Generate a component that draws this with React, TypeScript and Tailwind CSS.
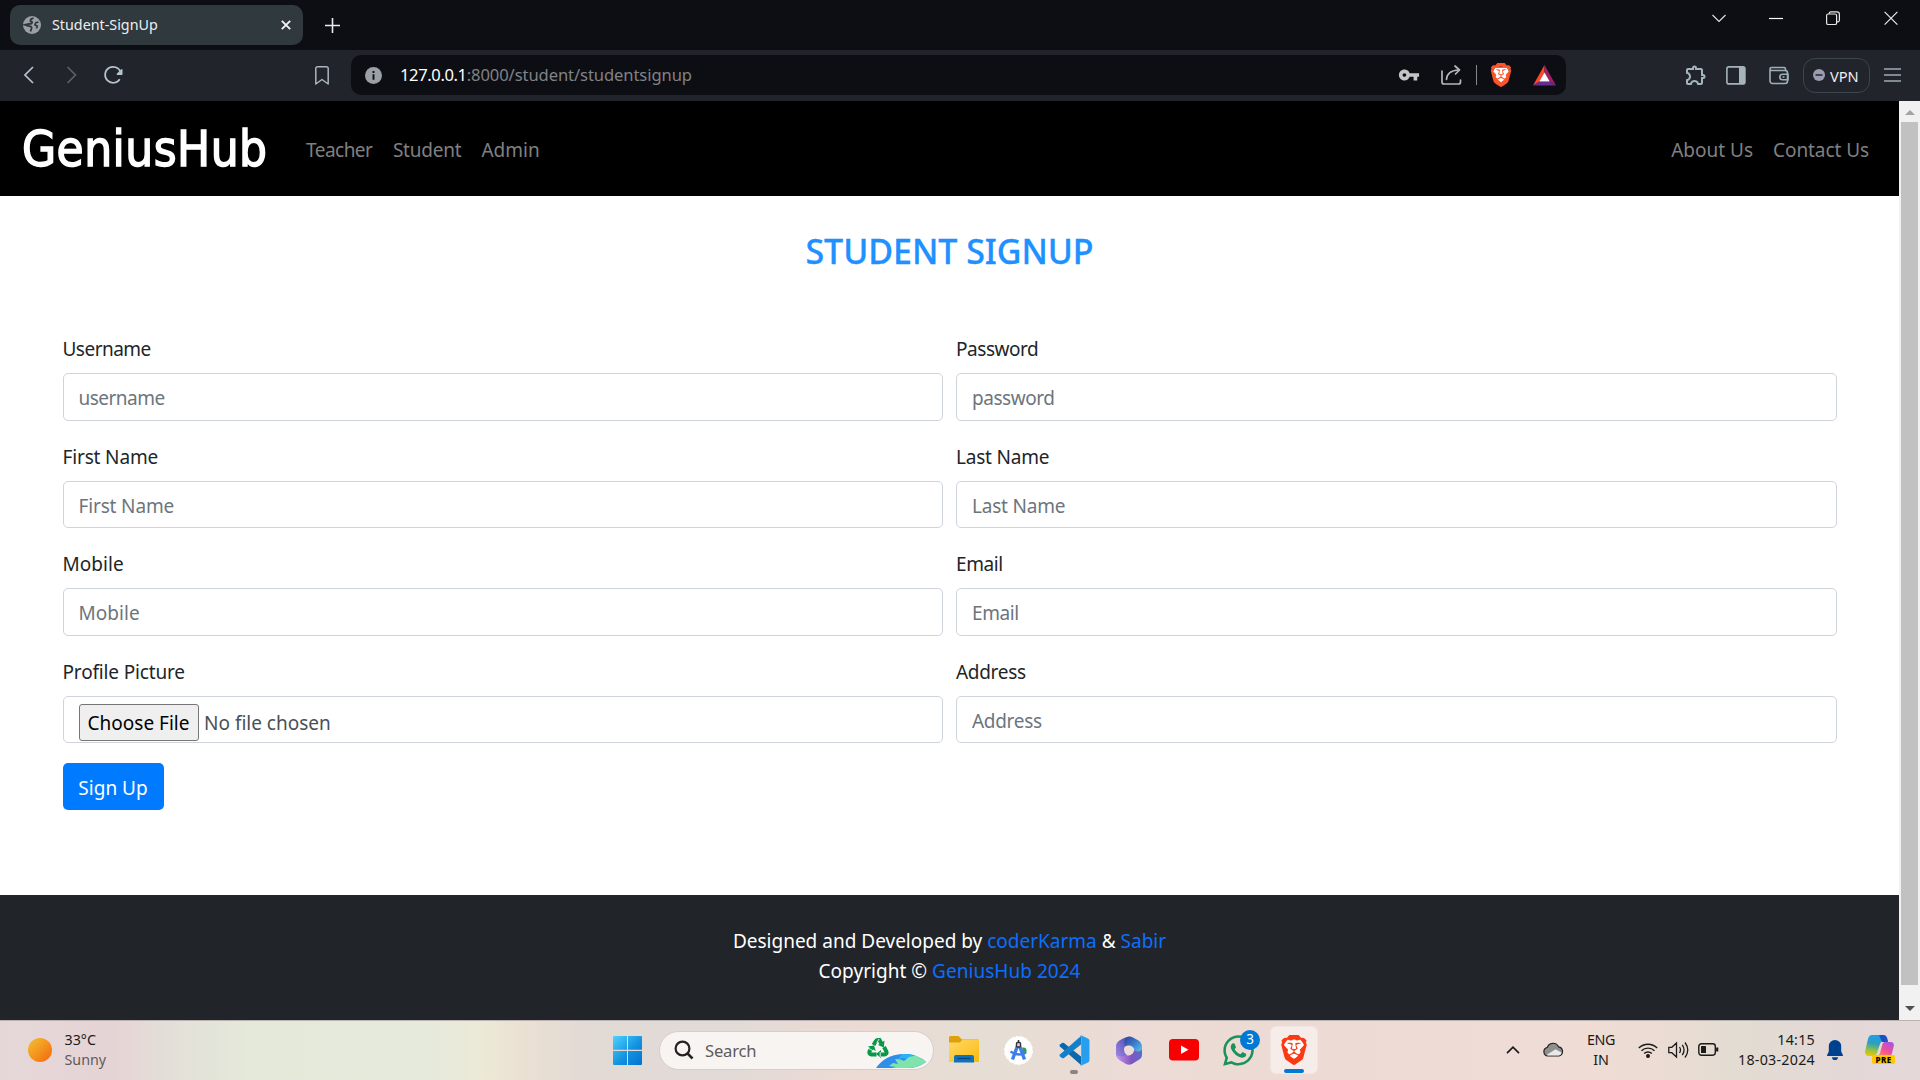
import React from "react";
import { SiBrave } from "react-icons/si";
import { FaWhatsapp } from "react-icons/fa";
import { MdOutlineExtension, MdVpnKey } from "react-icons/md";

function TabStrip() {
  return (
    <div className="flex h-[50px] items-start bg-[#0d0e13]">
      <div className="mt-[5px] ml-[10px] flex h-10 w-[293px] items-center rounded-[10px] bg-[#30393d] pr-3 pl-[13px]">
        <svg width="18" height="18" viewBox="0 0 18 18">
          <circle cx="9" cy="9" r="9" fill="#9aa0a6" />
          <path d="M10.500 2.200Q7.200 3 7.400 5l1.800 1.200Q8.800 8 6 8l-4 .8 3.500 1.400q2.800-.4 3.200 1.500L7.500 15.500" fill="none" stroke="#30393d" strokeWidth="1.800" />
          <path d="M15.500 6l-2.700.8-.8 2 2.300 1.400-.8 2.300" fill="none" stroke="#30393d" strokeWidth="1.700" />
        </svg>
        <span className="ml-[11px] flex-1 text-[14.3px] leading-5 text-[#eceff1]">Student-SignUp</span>
        <svg width="10" height="10" viewBox="0 0 10 10" stroke="#f1f3f4" strokeWidth="1.900">
          <path d="M.8.8l8.400 8.400M9.200.8.8 9.200" />
        </svg>
      </div>
      <svg className="mt-[17px] ml-[21px]" width="17" height="17" viewBox="0 0 17 17" stroke="#e8eaed" strokeWidth="1.600">
        <path d="M8.500 1v15M1 8.500h15" />
      </svg>
      <div className="mt-[10px] mr-[22px] ml-auto flex items-center text-[#e6e6e6]">
        <svg width="14" height="16" viewBox="0 0 14 16" fill="none" stroke="currentColor" strokeWidth="1.100">
          <path d="M.5 5 7 11.500 13.500 5" />
        </svg>
        <svg className="ml-[43px]" width="14" height="16" viewBox="0 0 14 16" stroke="#fff" strokeWidth="1.200">
          <path d="M0 8.500h14" />
        </svg>
        <svg className="ml-[43px]" width="14" height="16" viewBox="0 0 14 16" fill="none" stroke="currentColor" strokeWidth="1.200">
          <rect x=".6" y="4" width="10" height="10.500" rx="1.600" />
          <path d="M3.200 4V3.200A1.600 1.600 0 0 1 4.800 1.800h6.200a2.400 2.400 0 0 1 2.400 2.400v6a1.600 1.600 0 0 1-1.600 1.600h-1" />
        </svg>
        <svg className="ml-[44px]" width="14" height="16" viewBox="0 0 14 16" stroke="currentColor" strokeWidth="1.200">
          <path d="M.6 1.800l12.800 12.800M13.400 1.800.6 14.600" />
        </svg>
      </div>
    </div>
  );
}

function BraveShield({ className, color }: { className: string; color: string }) {
  return (
    <span className={`relative block ${className}`}>
      <svg className="absolute inset-0 size-full" viewBox="0 0 24 24">
        <path d="M6 4.500h12l2 4-2.500 9L12 22l-5.500-4.500L4 8.500z" fill="#fff" />
      </svg>
      <SiBrave className="relative size-full" color={color} />
    </span>
  );
}

function Toolbar() {
  return (
    <div className="flex h-[51px] items-center bg-[#22242c] text-[#a3adb3]">
      <svg className="mb-px ml-6" width="11" height="18" viewBox="0 0 11 18" fill="none" stroke="#b5c4ca" strokeWidth="1.700">
        <path d="M9 1 1 9l8 8" />
      </svg>
      <svg className="mb-px ml-[31px]" width="11" height="18" viewBox="0 0 11 18" fill="none" stroke="#5c6167" strokeWidth="1.700">
        <path d="M1.500 1l8 8-8 8" />
      </svg>
      <svg className="mb-[2px] ml-[26px]" width="20" height="20" viewBox="0 0 20 20" fill="none" stroke="#b5c4ca" strokeWidth="1.700">
        <path d="M16.800 14.200A8 8 0 1 1 17.600 7" />
        <path d="M18.800 4.800v4.500h-4.500z" fill="#b5c4ca" strokeLinejoin="round" strokeWidth="1.400" />
      </svg>
      <svg className="ml-[192px]" width="14" height="19" viewBox="0 0 14 19" fill="none" stroke="#a9b5ba" strokeWidth="1.500" strokeLinejoin="round">
        <path d="M.8 2.500A1.700 1.700 0 0 1 2.500.8h9a1.700 1.700 0 0 1 1.700 1.700V18L7 13.500.8 18z" />
      </svg>
      <div className="mb-px ml-[22px] flex h-10 w-[1215px] items-center rounded-[10px] bg-[#0d0e13] pl-[14px]">
        <svg width="17" height="17" viewBox="0 0 17 17">
          <circle cx="8.500" cy="8.500" r="8.500" fill="#9aa0a6" />
          <path d="M8.500 7.200v5.600M8.500 3.900v2" stroke="#0d0e13" strokeWidth="1.900" />
        </svg>
        <span className="ml-[18px] text-[16.6px] leading-6 tracking-[-0.4px] text-white">127.0.0.1</span>
        <span className="text-[16.6px] leading-6 tracking-[-0.1px] text-[#808286]">:8000/student/studentsignup</span>
        <MdVpnKey className="mb-px ml-auto" size={22} color="#c4c5c7" />
        <svg className="ml-[21px]" width="21" height="20" viewBox="0 0 21 20" fill="none" stroke="#b4b6b9" strokeWidth="1.700" strokeLinecap="round" strokeLinejoin="round">
          <path d="M1 6v11a2 2 0 0 0 2 2h14.500a2 2 0 0 0 2-2v-2" />
          <path d="M5.500 14.500c.3-6 4-9 12-9.500M14 1l4.500 4L14.500 9" />
        </svg>
        <span className="ml-[14px] h-5 w-px bg-[#85878c]" />
        <BraveShield className="ml-[12px] size-6" color="#fb542b" />
        <svg className="mr-[10px] ml-[20px]" width="23" height="21" viewBox="0 0 23 21">
          <path d="M11.500 0 0 20.500 6.500 16.500 11.500 8z" fill="#ff4724" />
          <path d="M11.500 0 23 20.500 16.500 16.500 11.500 8z" fill="#9e1f63" />
          <path d="M0 20.500h23l-6.500-4h-10z" fill="#662d91" />
          <path d="M11.500 7.500l5.200 9.100H6.300z" fill="#fff" />
        </svg>
      </div>
      <MdOutlineExtension className="mb-px ml-[118px]" size={24} color="#a3b4ba" />
      <svg className="mb-px ml-[18px]" width="20" height="19" viewBox="0 0 20 19">
        <rect x=".9" y=".9" width="18" height="17" rx="2" fill="none" stroke="#a6b4ba" strokeWidth="1.600" />
        <path d="M13 1h4.500A1.500 1.500 0 0 1 19 2.500v14a1.500 1.500 0 0 1-1.500 1.500H13z" fill="#a6b4ba" />
      </svg>
      <svg className="mb-px ml-[23px]" width="20" height="19" viewBox="0 0 20 19" fill="none" stroke="#9eb0b6" strokeWidth="1.600">
        <path d="M1 3v12a2.500 2.500 0 0 0 2.500 2.500h12.500a2.500 2.500 0 0 0 2.500-2.500V7A2.500 2.500 0 0 0 16 4.500H2.500a1.500 1.500 0 0 1 0-3H15A1.500 1.500 0 0 1 16.500 3v1.500" />
        <path d="M19 8.300h-5.500a2.700 2.700 0 0 0 0 5.400H19zM13.500 11h2" />
      </svg>
      <div className="mb-px ml-[14px] flex h-[35px] w-[67px] items-center rounded-[12px] border border-[#3c464b] pl-[9px]">
        <svg width="12" height="12" viewBox="0 0 12 12">
          <circle cx="6" cy="6" r="6" fill="#9a9cb0" />
          <path d="M2.500 6h7" stroke="#22242c" strokeWidth="1.500" />
        </svg>
        <span className="ml-[5px] pt-px text-[14.6px] leading-5 text-[#eeeef2]">VPN</span>
      </div>
      <svg className="mb-px ml-[14px]" width="17" height="14" viewBox="0 0 17 14" stroke="#9eabb0" strokeWidth="1.500">
        <path d="M0 1h17M0 7h17M0 13h17" />
      </svg>
    </div>
  );
}

function NavBar() {
  return (
    <nav className="flex h-[95px] items-center bg-black pt-0.5 pr-[30px] pl-[22px] text-[19px] leading-[30px] text-[#808080]">
      <a className="w-[284px] font-['DejaVu_Sans_Condensed','DejaVu_Sans'] text-[49px] leading-none tracking-[0.45px] font-stretch-condensed text-white [-webkit-text-stroke:1.4px_white]">GeniusHub</a>
      <a className="tracking-[-0.52px]">Teacher</a>
      <a className="ml-[20.500px] tracking-[-0.22px]">Student</a>
      <a className="ml-5">Admin</a>
      <a className="ml-auto">About Us</a>
      <a className="ml-5 tracking-[-0.07px]">Contact Us</a>
    </nav>
  );
}

function Field({ label, placeholder, spacing = "" }: { label: string; placeholder: string; spacing?: string }) {
  return (
    <label className="flex flex-col">
      <span className={`mb-[9px] h-[31px] pt-px leading-[30px] text-[#212529] ${spacing}`}>{label}</span>
      <input
        className={`h-[47.5px] rounded-[5px] border border-[#ced4da] bg-white px-[15px] pt-[2.7px] leading-[30px] placeholder:text-[#6c757d] ${spacing}`}
        placeholder={placeholder}
      />
    </label>
  );
}

function SignupPage() {
  return (
    <main className="flex flex-1 flex-col bg-white px-[62.5px] pt-[34px]">
      <h3 className="h-[42px] text-center text-[34px] leading-[42px] font-medium tracking-[-0.04px] text-[#1e90ff] [-webkit-text-stroke:0.3px_#1e90ff]">STUDENT SIGNUP</h3>
      <form className="mt-[61px] grid grid-cols-2 gap-x-[13px] gap-y-5 text-[19px]">
        <Field label="Username" placeholder="username" spacing="tracking-[-0.52px]" />
        <Field label="Password" placeholder="password" spacing="tracking-[-0.45px]" />
        <Field label="First Name" placeholder="First Name" spacing="tracking-[-0.15px]" />
        <Field label="Last Name" placeholder="Last Name" spacing="tracking-[-0.2px]" />
        <Field label="Mobile" placeholder="Mobile" spacing="tracking-[0.04px]" />
        <Field label="Email" placeholder="Email" spacing="tracking-[-0.4px]" />
        <div className="flex flex-col">
          <span className="mb-[9px] h-[31px] pt-px leading-[30px] tracking-[-0.16px] text-[#212529]">Profile Picture</span>
          <div className="flex h-[47.5px] items-start rounded-[5px] border border-[#ced4da] px-[15px] pt-[7px] text-[#495057]">
            <button type="button" className="h-[37px] w-[120px] rounded-[3px] border border-[#767676] bg-[#efefef] text-center leading-[36px] text-black">
              Choose File
            </button>
            <span className="ml-[5.500px] leading-[38px]">No file chosen</span>
          </div>
        </div>
        <Field label="Address" placeholder="Address" spacing="tracking-[-0.3px]" />
        <button type="button" className="h-[47px] w-[101px] rounded-[5px] bg-[#007bff] pt-[3px] text-center leading-[44px] text-white">
          Sign Up
        </button>
      </form>
    </main>
  );
}

function Footer() {
  return (
    <footer className="h-[125px] bg-[#212529] pt-[30.5px] text-center text-[19px] leading-[30px] text-white">
      <p>
        Designed and Developed by <a className="text-[#0d6efd]">coderKarma</a> &amp; <a className="text-[#0d6efd]">Sabir</a>
      </p>
      <p className="tracking-[0.03px]">
        Copyright © <a className="text-[#0d6efd]">GeniusHub 2024</a>
      </p>
    </footer>
  );
}

function ScrollBar() {
  return (
    <div className="flex w-[21px] flex-col items-center bg-[#f1f1f1]">
      <div className="flex h-[21px] items-center pt-0.5">
        <svg width="10" height="5" viewBox="0 0 10 5"><path d="M0 5 5 0l5 5z" fill="#a3a3a3" /></svg>
      </div>
      <div className="w-[17px] flex-1 bg-[#c1c1c1]" />
      <div className="flex h-[35px] items-end pb-[9px]">
        <svg width="10" height="5" viewBox="0 0 10 5"><path d="M0 0h10L5 5z" fill="#505050" /></svg>
      </div>
    </div>
  );
}

function SearchPill() {
  return (
    <div className="ml-[17px] flex h-[39px] w-[275px] items-center overflow-hidden rounded-full border border-[#d6cdca] bg-[#f8f4f2] pl-[14px]">
      <svg width="20" height="20" viewBox="0 0 20 20" fill="none" stroke="#232323" strokeWidth="2.200">
        <circle cx="8.500" cy="8.500" r="6.900" />
        <path d="M13.400 13.400 18.500 18.500" strokeWidth="2.600" />
      </svg>
      <span className="ml-[11px] pt-px text-[16.6px] leading-6 tracking-[-0.2px] text-[#5d5b5a]">Search</span>
      <div className="relative ml-auto h-[37px] w-[68px]">
        <svg className="absolute top-[6px] left-[2px]" width="22" height="20" viewBox="0 0 22 20" fill="none" stroke="#07984a" strokeWidth="4">
          <path d="M6.500 7 8.800 3.200Q9.500 2 11 2h1.500L15 6.500" />
          <path d="M17 9l2.300 4.200q1 2.800-1.800 3.300H12.500" />
          <path d="M9.500 16.500H4.500Q1.500 16 2.700 13L5 9.500" />
          <path d="M17.500 2.500 16.800 9.500 11 7zM14 12v8l-5-4zM.8 8.500 7 7.500l1.800 5.500z" fill="#07984a" stroke="none" />
          <path d="M9.700 5.300 12 1M13.200 19v-5M5.500 12.500 1 10" stroke="#f8f4f2" strokeWidth=".9" />
        </svg>
        <svg className="absolute top-[22px] left-[11px]" width="50" height="15" viewBox="0 0 50 15">
          <path d="M0 14Q9 1 26 0 42 0 50 8q-8 6-18 6z" fill="#2f8fe8" />
          <path d="M26 0q8-1 14 2l-6 3-8-1-4 2z" fill="#29b2f4" />
          <path d="M19 5q6 0 9 2l5-4 6-1.200Q46 4 50 8q-8 6-18 6H16l4-1-7-1 4-3 5 1z" fill="#7fe3ab" />
        </svg>
      </div>
    </div>
  );
}

function TaskbarApps() {
  return (
    <div className="flex items-center pb-px">
      <svg width="29" height="29" viewBox="0 0 29 29">
        <defs>
          <linearGradient id="win" x1="0" y1="0" x2="1" y2="1">
            <stop offset="0" stopColor="#4fd2ff" />
            <stop offset=".55" stopColor="#1492e0" />
            <stop offset="1" stopColor="#0272d0" />
          </linearGradient>
        </defs>
        <path d="M1 0h13v13.800H0V1a1 1 0 0 1 1-1zM15 0h13a1 1 0 0 1 1 1v12.800H15zM0 15h14v14H1a1 1 0 0 1-1-1zM15 15h14v13a1 1 0 0 1-1 1H15z" fill="url(#win)" />
      </svg>
      <SearchPill />
      <svg className="mb-px ml-[15px]" width="30" height="27" viewBox="0 0 30 27">
        <defs>
          <linearGradient id="folder" x1="0" y1="0" x2="1" y2="1">
            <stop offset="0" stopColor="#ffd968" />
            <stop offset="1" stopColor="#fcb90f" />
          </linearGradient>
        </defs>
        <path d="M0 1.500A1.500 1.500 0 0 1 1.500 0h8L13 3.500h16A1.500 1.500 0 0 1 30 5v5H0z" fill="#dfa00b" />
        <path d="M0 6.500h10.500l3-2.500H30v22H0z" fill="url(#folder)" />
        <path d="M5 26.500V21a2 2 0 0 1 2-2h16a2 2 0 0 1 2 2v5.500z" fill="#0f72bd" />
        <path d="M8.500 22.500h13" stroke="#0a447f" strokeWidth="1.300" />
      </svg>
      <svg className="ml-[25px]" width="29" height="29" viewBox="0 0 29 29">
        <circle cx="14.500" cy="14.500" r="13.900" fill="#fff" stroke="#fff" strokeDasharray="3 1.800" />
        <path d="M18 11.500h1.500a3 3 0 0 1 3 3v1.500q0 2-3 2.500z" fill="#2c9d54" />
        <path d="M14 8.500 8.500 23.500M15 8.500l5.500 15" stroke="#3f7ee8" strokeWidth="3.400" fill="none" />
        <path d="M6.500 15.500q8 5.500 15.500 1" stroke="#3f7ee8" strokeWidth="2.400" fill="none" />
        <rect x="12.500" y="6.500" width="4" height="4.500" rx="1" fill="#d8dce0" stroke="#30353b" strokeWidth="1.400" />
        <path d="M14.500 4v2.500" stroke="#30353b" strokeWidth="1.500" />
      </svg>
      <div className="relative ml-[26px]">
        <svg width="31" height="31" viewBox="0 0 31 31">
          <path d="M1 9.500 3 8q1-.7 2 0l17 13.500V30L.9 11.500q-.8-1 .1-2z" fill="#0b68ad" />
          <path d="M1 21.500 3 23q1 .7 2 0L22 9.500V1L.9 19.500q-.8 1 .1 2z" fill="#1280c8" />
          <path d="M22.500.5 29 3.600q1.500.7 1.500 2.400v19q0 1.700-1.500 2.400l-6.500 3.100q-1.200.4-2-.5 1.700 1 1.700-.9V1.900Q22.200.3 20.500 1q.8-.9 2-.5z" fill="#26a0ee" />
        </svg>
        <span className="absolute top-[35px] left-[11px] h-1 w-2 rounded-full bg-[#8c8482]" />
      </div>
      <svg className="ml-[25px]" width="28" height="29" viewBox="0 0 28 29">
        <defs>
          <linearGradient id="m1" x1="0" y1="1" x2="1" y2="0">
            <stop offset="0" stopColor="#a98be0" /><stop offset=".5" stopColor="#7468cc" /><stop offset="1" stopColor="#3d46a0" />
          </linearGradient>
          <linearGradient id="m2" x1="0" y1="0" x2="1" y2="1">
            <stop offset="0" stopColor="#2b3f94" /><stop offset=".5" stopColor="#3f7fd0" /><stop offset="1" stopColor="#5fd0ee" />
          </linearGradient>
          <linearGradient id="m3" x1="0" y1="0" x2="1" y2="0">
            <stop offset="0" stopColor="#c69be8" /><stop offset=".6" stopColor="#8254c2" /><stop offset="1" stopColor="#5a6cc8" />
          </linearGradient>
        </defs>
        <path d="M14 .8Q10 1 7 3 1 6 1 10v9q1 4 5 5l6-5q-3-2-3-5 0-5 7-9z" fill="url(#m1)" />
        <path d="M12 1q3-1 6 .5l5.500 3Q27 7 27 11v7q-3-2-8-3 1-4-4-5.500-3-.5-5 1Q8 4 12 1z" fill="url(#m2)" />
        <path d="M27 13v6q0 3-3.500 5L17 28q-3 1.500-6 0l-6-3.500Q2 23 1 19q6 3 10 0 1.500.5 3 .5 4.500-1 5-5Q26 17 27 13z" fill="url(#m3)" />
      </svg>
      <svg className="mb-px ml-[26px]" width="30" height="22" viewBox="0 0 30 22">
        <rect width="30" height="21.500" rx="4" fill="#f80000" />
        <path d="M12 6.500v8.500l7.500-4.200z" fill="#fff" />
      </svg>
      <div className="relative ml-[22px]">
        <FaWhatsapp size={35} color="#1c9158" />
        <span className="absolute -top-[3px] left-[19px] flex size-5 items-center justify-center rounded-full bg-[#0078d4] text-[13.500px] leading-none text-white">3</span>
      </div>
      <div className="relative ml-[14px] flex size-12 items-center justify-center rounded-md border border-[#f0e6e4] bg-[#f6edeb]">
        <BraveShield className="size-[30px]" color="#fb3a14" />
        <span className="absolute bottom-0 h-1 w-5 rounded-full bg-[#0078d4]" />
      </div>
    </div>
  );
}

function Tray() {
  return (
    <div className="ml-auto flex items-center pr-[25px] pb-0.5 text-[14.3px] leading-5 text-[#1b1b1b]">
      <svg width="14" height="8" viewBox="0 0 14 8" fill="none" stroke="#1b1b1b" strokeWidth="1.700">
        <path d="M1 7.200 7 1.200l6 6" />
      </svg>
      <svg className="ml-[23px]" width="21" height="15" viewBox="0 0 21 15" stroke="#222" strokeWidth="1.200">
        <path d="M5 14a4.300 4.300 0 0 1-.7-8.500A6 6 0 0 1 15.500 4.800 4.700 4.700 0 0 1 16 14z" fill="#8e8e8e" />
        <path d="M3.500 13 12.500 7.200 18.500 10.500Q18.500 13 16 13.400H5z" fill="#e8e8e8" stroke="none" />
      </svg>
      <div className="ml-[23px] w-7 text-center">
        <p className="tracking-[-0.38px]">ENG</p>
        <p>IN</p>
      </div>
      <svg className="ml-[23px]" width="20" height="16" viewBox="0 0 20 16" fill="none" stroke="#1b1b1b" strokeWidth="1.400">
        <path d="M.8 6a13 13 0 0 1 18.400 0M3.500 8.800a9.200 9.200 0 0 1 13 0M6.200 11.500a5.400 5.400 0 0 1 7.600 0" />
        <circle cx="10" cy="14" r="1.300" fill="#1b1b1b" />
      </svg>
      <svg className="ml-[10px]" width="21" height="18" viewBox="0 0 21 18" fill="none" stroke="#1b1b1b" strokeWidth="1.300">
        <path d="M.8 6.300h3L8.500 2v14l-4.700-4.300h-3zM11.500 6q2 3 0 6M14.300 3.800q3.500 5.200 0 10.400M17 1.500q5.500 7.500 0 15" />
      </svg>
      <svg className="ml-[9px]" width="21" height="13" viewBox="0 0 21 13" fill="none" stroke="#1b1b1b" strokeWidth="1.400">
        <rect x=".8" y=".8" width="16.500" height="11.400" rx="2.600" />
        <rect x="3" y="3" width="5" height="7" rx=".6" fill="#1b1b1b" stroke="none" />
        <path d="M19.200 4.500v4" strokeWidth="2.200" />
      </svg>
      <div className="ml-[16px] w-20 text-right tracking-[0.24px] whitespace-nowrap">
        <p>14:15</p>
        <p>18-03-2024</p>
      </div>
      <svg className="ml-[12px]" width="16" height="20" viewBox="0 0 16 20" fill="#00418f">
        <path d="M8 0a6.200 6.200 0 0 1 6.200 6.200v5.300l1.700 3.600q.3 1-.7 1H.8q-1 0-.7-1l1.700-3.600V6.200A6.200 6.200 0 0 1 8 0zM5 17.200h6a3 3 0 0 1-6 0z" />
      </svg>
      <div className="relative ml-[22px] h-[29px] w-[30px]">
        <svg width="30" height="29" viewBox="0 0 30 29">
          <defs>
            <linearGradient id="c1" x1=".4" y1="0" x2=".2" y2="1">
              <stop offset="0" stopColor="#1aa0f0" /><stop offset=".4" stopColor="#2f9fb8" /><stop offset=".75" stopColor="#9cc43c" /><stop offset="1" stopColor="#f5c400" />
            </linearGradient>
            <linearGradient id="c2" x1=".8" y1="0" x2=".2" y2="1">
              <stop offset="0" stopColor="#a854e8" /><stop offset=".5" stopColor="#ec4f9c" /><stop offset="1" stopColor="#ff8a4c" />
            </linearGradient>
          </defs>
          <path d="M7 0h11q3 0 4 3l1 3h-4q-3 0-4 3l-3 9q-1 3-3 3H3Q-.8 20 .3 15.500L3 4q1-4 4-4z" fill="url(#c1)" />
          <path d="M14 0h4q3 0 4 3l1 4h-6z" fill="#1b50c8" />
          <path d="M19.500 7h6.800q3 .5 2.500 4l-2 8q-1 3-3 3H12q2-1 3-4l2.500-9q.7-2 2-2z" fill="url(#c2)" />
        </svg>
        <span className="absolute top-[20px] left-[7px] h-[9px] w-[23px] rounded-[2px] bg-[#ffc800] text-center text-[8px] leading-[9px] font-extrabold tracking-[0.4px] text-black">PRE</span>
      </div>
    </div>
  );
}

function Taskbar() {
  return (
    <div className="flex h-[60px] items-center border-t border-[#b9b2b1] bg-[linear-gradient(90deg,#e5d7d8_0px,#e6d4d5_115px,#e3e0d8_175px,#e4e9da_250px,#e5eadc_420px,#ece9d7_480px,#eae0d2_525px,#e3dad5_580px,#e1dad7_720px,#ecdad4_850px,#e5ded4_980px,#ecdbd6_1120px,#eddad5_1300px,#efdcd6_1560px,#ecdcd3_1660px,#e2dcd2_1740px,#e4d7d7_1860px,#e4d8d9_1920px)]">
      <div className="flex w-[613px] items-center pb-0.5 pl-7">
        <span className="size-6 rounded-full bg-linear-to-br from-[#f0c131] to-[#f26307]" />
        <div className="ml-[12.500px] text-[14.3px] leading-5">
          <p className="text-[#1b1b1b]">33°C</p>
          <p className="text-[#5f5b5a]">Sunny</p>
        </div>
      </div>
      <TaskbarApps />
      <Tray />
    </div>
  );
}

export default function App() {
  return (
    <div className="flex h-[1080px] w-[1920px] flex-col overflow-hidden font-['Noto_Sans','Open_Sans',sans-serif]">
      <TabStrip />
      <Toolbar />
      <div className="flex h-[919px]">
        <div className="flex w-[1899px] flex-col">
          <NavBar />
          <SignupPage />
          <Footer />
        </div>
        <ScrollBar />
      </div>
      <Taskbar />
    </div>
  );
}
